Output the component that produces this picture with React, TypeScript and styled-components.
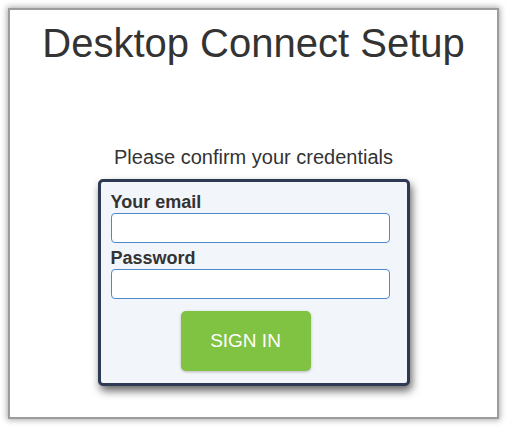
import React from "react";
import styled, { createGlobalStyle } from "styled-components";

const GlobalStyle = createGlobalStyle`
  html, body { margin: 0; padding: 0; background: #ffffff; }
  body { font-family: Arial, "Liberation Sans", sans-serif; color: #333333; }
`;

const Page = styled.div`
  box-sizing: border-box;
  width: 509px;
  height: 428px;
  padding: 10px 0 0 10px;
  overflow: hidden;
`;

const Frame = styled.div`
  box-sizing: border-box;
  width: 487px;
  height: 407px;
  background: #ffffff;
  box-shadow: 0 0 0 2px #9c9c9c, 0 0 6px 3px #a8a8a8;
  display: flex;
  flex-direction: column;
  align-items: center;
  padding-top: 10px;
`;

const Title = styled.h1`
  margin: 0;
  font-size: 40px;
  line-height: 46px;
  font-weight: normal;
  color: #333333;
`;

const Subtitle = styled.p`
  margin: 80px 0 0;
  font-size: 20px;
  line-height: 23px;
  color: #333333;
`;

const Card = styled.form`
  box-sizing: border-box;
  margin-top: 10px;
  width: 312px;
  border: 3px solid #2e3a54;
  border-radius: 5px;
  background: #f2f5fa;
  box-shadow: 2px 5px 8px rgba(0, 0, 0, 0.6);
  padding: 10px 0 12px 10px;
  display: flex;
  flex-direction: column;
`;

const Label = styled.label<{ $gap?: number }>`
  display: block;
  margin-top: ${(p) => p.$gap ?? 0}px;
  font-size: 18px;
  line-height: 21px;
  font-weight: bold;
  color: #333333;
`;

const Input = styled.input`
  box-sizing: border-box;
  width: 279px;
  height: 30px;
  margin: 0;
  border: 1px solid #4f88cc;
  border-radius: 4px;
  background: #ffffff;
  padding: 0 8px;
  font-size: 16px;
  font-family: Arial, "Liberation Sans", sans-serif;
  outline: none;
`;

const ButtonRow = styled.div`
  display: flex;
  padding-left: 70px;
  margin-top: 12px;
`;

const Button = styled.button`
  width: 130px;
  height: 60px;
  border: none;
  border-radius: 5px;
  background: #80c241;
  color: #ffffff;
  font-size: 19px;
  font-family: Arial, "Liberation Sans", sans-serif;
  box-shadow: 0 1px 3px rgba(0, 0, 0, 0.25);
  cursor: pointer;
`;

export default function App() {
  return (
    <Page>
      <GlobalStyle />
      <Frame>
        <Title>Desktop Connect Setup</Title>
        <Subtitle>Please confirm your credentials</Subtitle>
        <Card onSubmit={(e) => e.preventDefault()}>
          <Label htmlFor="email">Your email</Label>
          <Input id="email" type="email" />
          <Label htmlFor="password" $gap={5}>Password</Label>
          <Input id="password" type="password" />
          <ButtonRow>
            <Button type="submit">SIGN IN</Button>
          </ButtonRow>
        </Card>
      </Frame>
    </Page>
  );
}
